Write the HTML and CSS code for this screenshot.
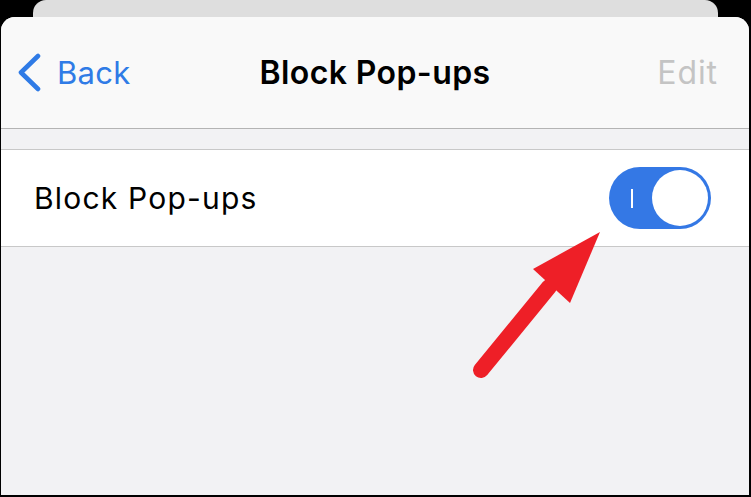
FILE: index.html
```html
<!DOCTYPE html>
<html>
<head>
<meta charset="utf-8">
<link rel="stylesheet" href="styles.css">
</head>
<body>
<div class="back-card"></div>
<div class="card">
  <header class="nav">
    <div class="nav-left">
      <svg class="chev" width="26" height="40" viewBox="0 0 26 40"><path d="M21 3 L4 19.5 L21 36" fill="none" stroke="#2f7be6" stroke-width="4.6" stroke-linecap="round" stroke-linejoin="round"/></svg>
      <span class="back">Back</span>
    </div>
    <div class="title">Block Pop-ups</div>
    <div class="edit">Edit</div>
  </header>
  <div class="gap"></div>
  <div class="row">
    <span class="row-label">Block Pop-ups</span>
    <div class="toggle"><span class="on-mark"></span><span class="knob"></span></div>
  </div>
  <div class="fill"></div>
</div>
<svg class="arrow" width="751" height="497" viewBox="0 0 751 497">
  <path d="M481 370 L549 287" stroke="#ee1f27" stroke-width="16" stroke-linecap="round" fill="none"/>
  <polygon points="600,232 533,269 570,303" fill="#ee1f27"/>
</svg>
</body>
</html>
```
FILE: styles.css
```css
html, body {
  margin: 0;
  padding: 0;
  background: #000;
  width: 751px;
  height: 497px;
  overflow: hidden;
  font-family: Inter, "Liberation Sans", sans-serif;
}
.back-card {
  margin: 0 33px 0 33px;
  height: 30px;
  background: #dedede;
  border-radius: 13px 13px 0 0;
}
.card {
  margin: -13px 2px 0 1px;
  height: 478px;
  border-radius: 14px 14px 0 0;
  overflow: hidden;
  background: #f2f2f4;
  display: flex;
  flex-direction: column;
}
.nav {
  height: 112px;
  background: #f9f9f9;
  border-bottom: 1px solid #b4b4b4;
  display: flex;
  align-items: center;
  justify-content: space-between;
  padding: 0 31px 0 16px;
  box-sizing: border-box;
  position: relative;
  flex: none;
}
.nav-left {
  display: flex;
  align-items: center;
  gap: 14px;
  color: #2f7be6;
  font-size: 31px;
  letter-spacing: 0.3px;
}
.chev { display: block; }
.title {
  position: absolute;
  left: 0;
  right: 0;
  text-align: center;
  font-size: 32px;
  font-weight: 600;
  letter-spacing: 0.4px;
  color: #000;
  pointer-events: none;
}
.edit {
  font-size: 32px;
  letter-spacing: 0.9px;
  color: #c4c4c4;
}
.gap {
  height: 20px;
  flex: none;
}
.row {
  height: 96px;
  background: #fff;
  border-top: 1px solid #c8c8c8;
  border-bottom: 1px solid #c8c8c8;
  display: flex;
  align-items: center;
  justify-content: space-between;
  padding: 0 38px 0 33px;
  flex: none;
}
.row-label {
  font-size: 30px;
  letter-spacing: 1.2px;
  color: #000;
}
.toggle {
  width: 102px;
  height: 62px;
  border-radius: 31px;
  background: #3478e5;
  display: flex;
  align-items: center;
  justify-content: space-between;
  padding: 0 3px 0 22px;
  box-sizing: border-box;
}
.on-mark {
  width: 2px;
  height: 19px;
  background: #fff;
}
.knob {
  width: 56px;
  height: 56px;
  border-radius: 50%;
  background: #fff;
}
.fill { flex: 1; }
.arrow {
  position: absolute;
  left: 0;
  top: 0;
}
```
